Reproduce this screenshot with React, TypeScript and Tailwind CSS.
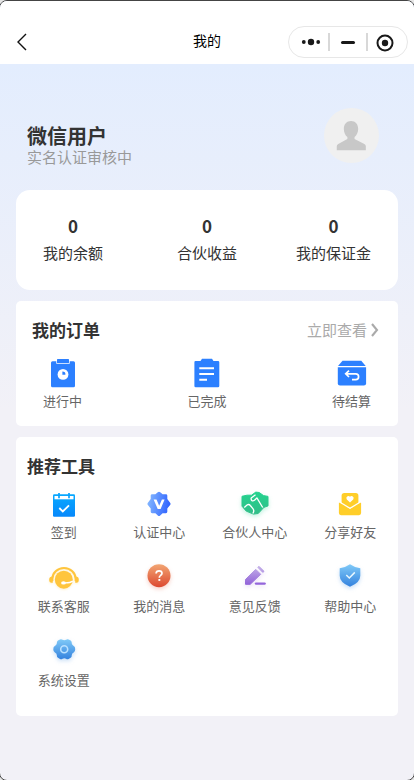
import type { ReactNode } from 'react'

interface Item {
  label: string
  icon: ReactNode
}

function Icon({ children, className = '' }: { children: ReactNode; className?: string }) {
  return (
    <svg viewBox="0 0 32 32" className={`w-8 h-8 overflow-visible shrink-0 ${className}`} fill="none">
      {children}
    </svg>
  )
}

function Gradient({ id, from, to, across }: { id: string; from: string; to: string; across?: boolean }) {
  return (
    <linearGradient id={id} x1="0" y1="0" x2={across ? '1' : '0'} y2={across ? '0.2' : '1'}>
      <stop stopColor={from} />
      <stop offset="1" stopColor={to} />
    </linearGradient>
  )
}

const stats = [
  { value: 0, label: '我的余额' },
  { value: 0, label: '合伙收益' },
  { value: 0, label: '我的保证金' },
]

const orders: Item[] = [
  {
    label: '进行中',
    icon: (
      <Icon>
        <path d="M5.5 4.3H9.3v2.5h13.4V4.3h3.8q1.500 0 1.500 1.500v23q0 1.500-1.500 1.500h-21Q4 30.300 4 28.800v-23q0-1.500 1.500-1.500Z" fill="#2c80ff" />
        <rect x="10" y="2" width="12" height="4" rx=".6" fill="#2c80ff" />
        <circle cx="16" cy="17.400" r="5.400" fill="#fff" />
        <path d="M15.400 14.400a3 3 0 0 1 3 3.300h-3Z" fill="#2c80ff" />
      </Icon>
    ),
  },
  {
    label: '已完成',
    icon: (
      <Icon>
        <path d="M4.500 4H9.500L11 1.800H21L22.500 4H27q1.300 0 1.300 1.300V29q0 1.300-1.300 1.300H4.700Q3.400 30.300 3.400 29V5.300Q3.400 4 4.500 4Z" fill="#2c80ff" />
        <path d="M8.300 11.300H23M8.300 17H23M8.300 22.700H16" stroke="#fff" strokeWidth="2" />
      </Icon>
    ),
  },
  {
    label: '待结算',
    icon: (
      <Icon>
        <path d="M6.500 3.700h18.800L29.700 9H2Z" fill="#2c80ff" />
        <path d="M1.800 10.300h28.300v16q0 2.200-2.200 2.200H4q-2.200 0-2.200-2.200Z" fill="#2c80ff" />
        <path d="M13 13.600 9.700 16.800l3.300 3.200M10 16.800h9.700a2.900 2.900 0 0 1 0 5.800H16" stroke="#fff" strokeWidth="1.700" />
      </Icon>
    ),
  },
]

const tools: Item[] = [
  {
    label: '签到',
    icon: (
      <Icon>
        <defs><Gradient id="sign" from="#08a9ff" to="#0788fb" /></defs>
        <rect x="5" y="6.300" width="22" height="22.500" rx="1.200" fill="url(#sign)" />
        <path d="M6.500 8h19v3.300h-19Z" fill="#fff" />
        <path d="M11 5v5.300M21 5v5.300" stroke="#08a3ff" strokeWidth="1.700" />
        <path d="m11.300 20 3.500 3.500 6.200-6.200" stroke="#fff" strokeWidth="1.800" />
      </Icon>
    ),
  },
  {
    label: '认证中心',
    icon: (
      <Icon>
        <defs><Gradient id="cert" from="#8abdff" to="#3266ff" across /></defs>
        <path
          d="M14.800 4.200q1.200-1 2.400 0l2.400 2h3.300q1.400 0 1.400 1.400v3.300l2.800 3.800q.9 1.200 0 2.400l-2.800 3.500v3.200q0 1.400-1.400 1.400h-3.300l-2.400 2.200q-1.200 1-2.400 0l-2.400-2.200H9.100q-1.400 0-1.400-1.400v-3.200l-2.800-3.500q-.9-1.200 0-2.400l2.800-3.800V7.600q0-1.400 1.400-1.400h3.300Z"
          fill="url(#cert)"
        />
        <path d="M10.600 11.500h2.900l2.700 6.300 2.700-6.300h2.700L17.600 21h-2.900Z" fill="#fff" />
      </Icon>
    ),
  },
  {
    label: '合伙人中心',
    icon: (
      <Icon className="drop-shadow-[0_2px_2px_#4bdaa655]">
        <defs><Gradient id="shake" from="#24d38f" to="#32bd88" /></defs>
        <path d="M3 8.300 8 7.200h4.500l4.300-3.100 3.400.4 4.300 3.100 4.500.8v9.500l-4 1.400-5.800 6.200-4.700.6-7.300-3-4.200-4.900Z" fill="url(#shake)" stroke="url(#shake)" strokeLinejoin="round" />
        <path d="m16.500 6.700-4.300 3.200q-.4 2.400 1 2.900 1.800.4 2.900-1.100l1.800-1.800 5.800 9.600" stroke="#fff" strokeWidth="1.300" strokeLinejoin="round" />
        <path d="M5.300 19.500 8 17q1.900-1.300 3.300.5l2.800 3.400q1.500 1.800-.2 4.600" stroke="#fff" strokeWidth="1.300" />
      </Icon>
    ),
  },
  {
    label: '分享好友',
    icon: (
      <Icon>
        <path d="M10.300 5h11.500q2.600 0 2.600 2.600v9L16 20.600l-8.400-4V7.600Q7.600 5 10.300 5Z" fill="#ffce29" />
        <path d="M16 14.400 12.800 11.400a2.100 2.100 0 0 1 3.200-2.700 2.100 2.100 0 0 1 3.200 2.700Z" fill="#fff" />
        <path d="m5.300 14.200 10.700 6.500 10.700-6.500q.4.300.4.800v10.100q0 2.100-2.100 2.100H7q-2.100 0-2.100-2.100V15q0-.500.4-.800Z" fill="#ffce29" />
        <path d="m5.200 13.700 10.800 6.600 10.800-6.600" stroke="#fff" strokeWidth="1.300" />
      </Icon>
    ),
  },
  {
    label: '联系客服',
    icon: (
      <Icon className="drop-shadow-[0_1px_1px_#ffc53d44]">
        <path d="M4.300 19v-2a11.700 11 0 0 1 23.400 0v2" stroke="#ffc53d" strokeWidth="2.100" />
        <path d="M4.800 14.700v6H3.500Q1.200 20.700 1.200 17.700t2.300-3ZM27.200 14.700v6h1.300q2.300 0 2.300-3t-2.300-3Z" fill="#ffc53d" />
        <circle cx="15.800" cy="17.700" r="9" fill="#ffc53d" />
        <path d="M15.500 20.800q6.500.3 9.300-1.700" stroke="#fff" strokeWidth="1.300" />
        <ellipse cx="15.500" cy="20.900" rx="2.400" ry="1.600" fill="#fff" />
      </Icon>
    ),
  },
  {
    label: '我的消息',
    icon: (
      <Icon className="drop-shadow-[0_2px_2px_#e0563a44]">
        <defs><Gradient id="msg" from="#f2a673" to="#dc4830" /></defs>
        <circle cx="16" cy="13.700" r="11.500" fill="url(#msg)" />
        <path d="M13.100 11.500q0-2.700 3-2.700 2.900 0 2.900 2.500 0 1.400-1.600 2.300-1.100.7-1.100 2.200" stroke="#fff" strokeWidth="1.700" />
        <rect x="15.400" y="17" width="1.900" height="1.900" fill="#fff" />
      </Icon>
    ),
  },
  {
    label: '意见反馈',
    icon: (
      <Icon className="drop-shadow-[0_2px_2px_#9d6bdb33]">
        <defs>
          <linearGradient id="pen" gradientUnits="userSpaceOnUse" x1="16" y1="4" x2="16" y2="23">
            <stop stopColor="#c4b2e8" />
            <stop offset="1" stopColor="#9060d8" />
          </linearGradient>
        </defs>
        <path d="m16.700 7.300 5 5L11.200 22.300H6.500V17.500Z" fill="url(#pen)" stroke="url(#pen)" strokeLinejoin="round" />
        <path d="m18.800 5.300 1.200-1 5 5-1.200 1.100Z" fill="url(#pen)" stroke="url(#pen)" strokeLinejoin="round" />
        <path d="M17 21.600h8.600" stroke="#9465db" strokeWidth="2.400" strokeLinecap="round" />
      </Icon>
    ),
  },
  {
    label: '帮助中心',
    icon: (
      <Icon className="drop-shadow-[0_2px_2px_#3b8be044]">
        <defs><Gradient id="shield" from="#80caf8" to="#3482de" /></defs>
        <path d="M16 2.200q4.500 3.300 10.300 4v7.500q0 6.800-10.300 11Q5.700 20.500 5.700 13.700V6.200q5.800-.7 10.300-4Z" fill="url(#shield)" />
        <path d="m12.300 13 3 3 5.500-5.600" stroke="#e8f7ff" strokeWidth="1.500" />
      </Icon>
    ),
  },
  {
    label: '系统设置',
    icon: (
      <Icon className="drop-shadow-[0_2px_2px_#3b8be044]">
        <defs><Gradient id="gear" from="#80caf8" to="#3482de" /></defs>
        <path
          d="M12 3.400q1.400-.6 2.500.3 1.800.9 3.600 0 1.100-.9 2.500-.3l2 1.200q1.300.8 1.100 2.700.2 1.900 2 2.600 1.500.5 1.500 3.300t-1.500 3.300q-1.800.8-2 2.700.2 1.900-1.100 2.600l-2 1.200q-1.400.6-2.500-.3-1.800-1-3.600 0-1.100.9-2.500.3l-2-1.200q-1.300-.7-1.100-2.600-.2-1.900-2-2.700Q5.300 16 5.300 13.200t1.600-3.300q1.800-.7 2-2.600-.2-1.900 1.100-2.700Z"
          fill="url(#gear)"
        />
        <circle cx="16.200" cy="13.200" r="3.500" stroke="#b9e0ff" strokeWidth="1.600" />
      </Icon>
    ),
  },
]

function NavBar() {
  return (
    <header className="h-[63px] bg-white grid grid-cols-[1fr_auto_1fr] items-end pb-1.5">
      <svg viewBox="0 0 12 18" className="w-3 h-[18px] ml-4 mb-[7px]" fill="none">
        <path d="M10 1 2 9l8 8" stroke="#111" strokeWidth="1.400" />
      </svg>
      <h1 className="text-sm leading-5 text-black mb-2">我的</h1>
      <div className="justify-self-end mr-1.5 w-[120px] h-8 rounded-full border border-[#e7e7e7] flex items-center">
        <svg viewBox="0 0 120 32" className="w-[120px] h-8 shrink-0 -ml-px" fill="#191919">
          <circle cx="15.800" cy="16" r="1.900" />
          <circle cx="23" cy="16" r="3.200" />
          <circle cx="30.200" cy="16" r="1.900" />
          <path d="M40 7h2v18h-2ZM78 7h2v18h-2Z" fill="#d8d8d8" />
          <rect x="53" y="15" width="14" height="3" rx="1.500" />
          <circle cx="97" cy="17" r="7.500" fill="none" stroke="#191919" strokeWidth="2" />
          <circle cx="97" cy="17" r="3.200" />
        </svg>
      </div>
    </header>
  )
}

function Profile() {
  return (
    <section className="h-[126px] pl-[27px] pr-[35px] pt-11 flex justify-between items-start">
      <div className="pt-4">
        <h2 className="text-xl leading-6 font-bold text-[#333]">微信用户</h2>
        <p className="text-[15px] leading-[18px] text-[#999]">实名认证审核中</p>
      </div>
      <svg viewBox="0 0 56 56" className="w-[55px] h-[55px]">
        <circle cx="28" cy="28" r="28" fill="#f0f0f0" />
        <path
          d="M27.500 13.300c4.500 0 7.300 3.300 7.300 8 0 3.800-1.700 6.600-3.700 8.200v2l10 5.100q1.500.9 1.500 2.300v4H13v-4q0-1.400 1.500-2.300l9.300-5.100v-2c-2-1.600-3.600-4.400-3.600-8.200 0-4.700 2.900-8 7.300-8Z"
          fill="#c8c8c8"
        />
      </svg>
    </section>
  )
}

export default function App() {
  return (
    <div className="h-[780px] overflow-hidden bg-[#e5e5e5]">
      {/* side and bottom borders sit just outside the window, only their corners show */}
      <div className="h-[781px] w-[416px] -ml-px overflow-hidden rounded-[8px] border border-[#444] bg-[#f2f1f7] bg-[linear-gradient(#e3edfe_63px,#f2f1f7_410px)] font-['Noto_Sans_CJK_SC',sans-serif]">
        <NavBar />
        <Profile />
        <main className="px-4 flex flex-col gap-[11px]">
          <section className="h-[100px] bg-white rounded-[14px] grid grid-cols-[114px_154px_99px] pt-6">
            {stats.map(s => (
              <div key={s.label} className="flex flex-col items-center whitespace-nowrap">
                <strong className="text-[17px] leading-6 mb-0.5 font-bold text-[#333]">{s.value}</strong>
                <span className="text-[15px] leading-[26px] text-[#333]">{s.label}</span>
              </div>
            ))}
          </section>

          <section className="h-[125px] bg-white rounded-[5px] pt-4">
            <div className="pl-4 pr-[19px] h-[26px] flex items-center justify-between">
              <h3 className="text-[17px] font-bold text-[#333]">我的订单</h3>
              <a className="flex items-center gap-1 text-[15px] text-[#aaa]">
                立即查看
                <svg viewBox="0 0 8 14" className="w-2 h-3.5" fill="none">
                  <path d="m1 1 5 6-5 6" stroke="#aaa" strokeWidth="2.100" />
                </svg>
              </a>
            </div>
            <div className="px-[27px] mt-3.5 flex justify-between">
              {orders.map(o => (
                <div key={o.label} className="w-[39px] flex flex-col items-center">
                  {o.icon}
                  <span className="mt-0.5 text-[13px] leading-5 text-[#666]">{o.label}</span>
                </div>
              ))}
            </div>
          </section>

          <section className="h-[279px] bg-white rounded-[5px] pt-4">
            <h3 className="pl-[11px] text-[17px] leading-[26px] font-bold text-[#333]">推荐工具</h3>
            <div className="mt-[9px] grid grid-cols-4 auto-rows-[74px]">
              {tools.map(t => (
                <div key={t.label} className="flex flex-col items-center">
                  {t.icon}
                  <span className="mt-0.5 text-[13px] leading-5 text-[#666]">{t.label}</span>
                </div>
              ))}
            </div>
          </section>
        </main>
      </div>
    </div>
  )
}
